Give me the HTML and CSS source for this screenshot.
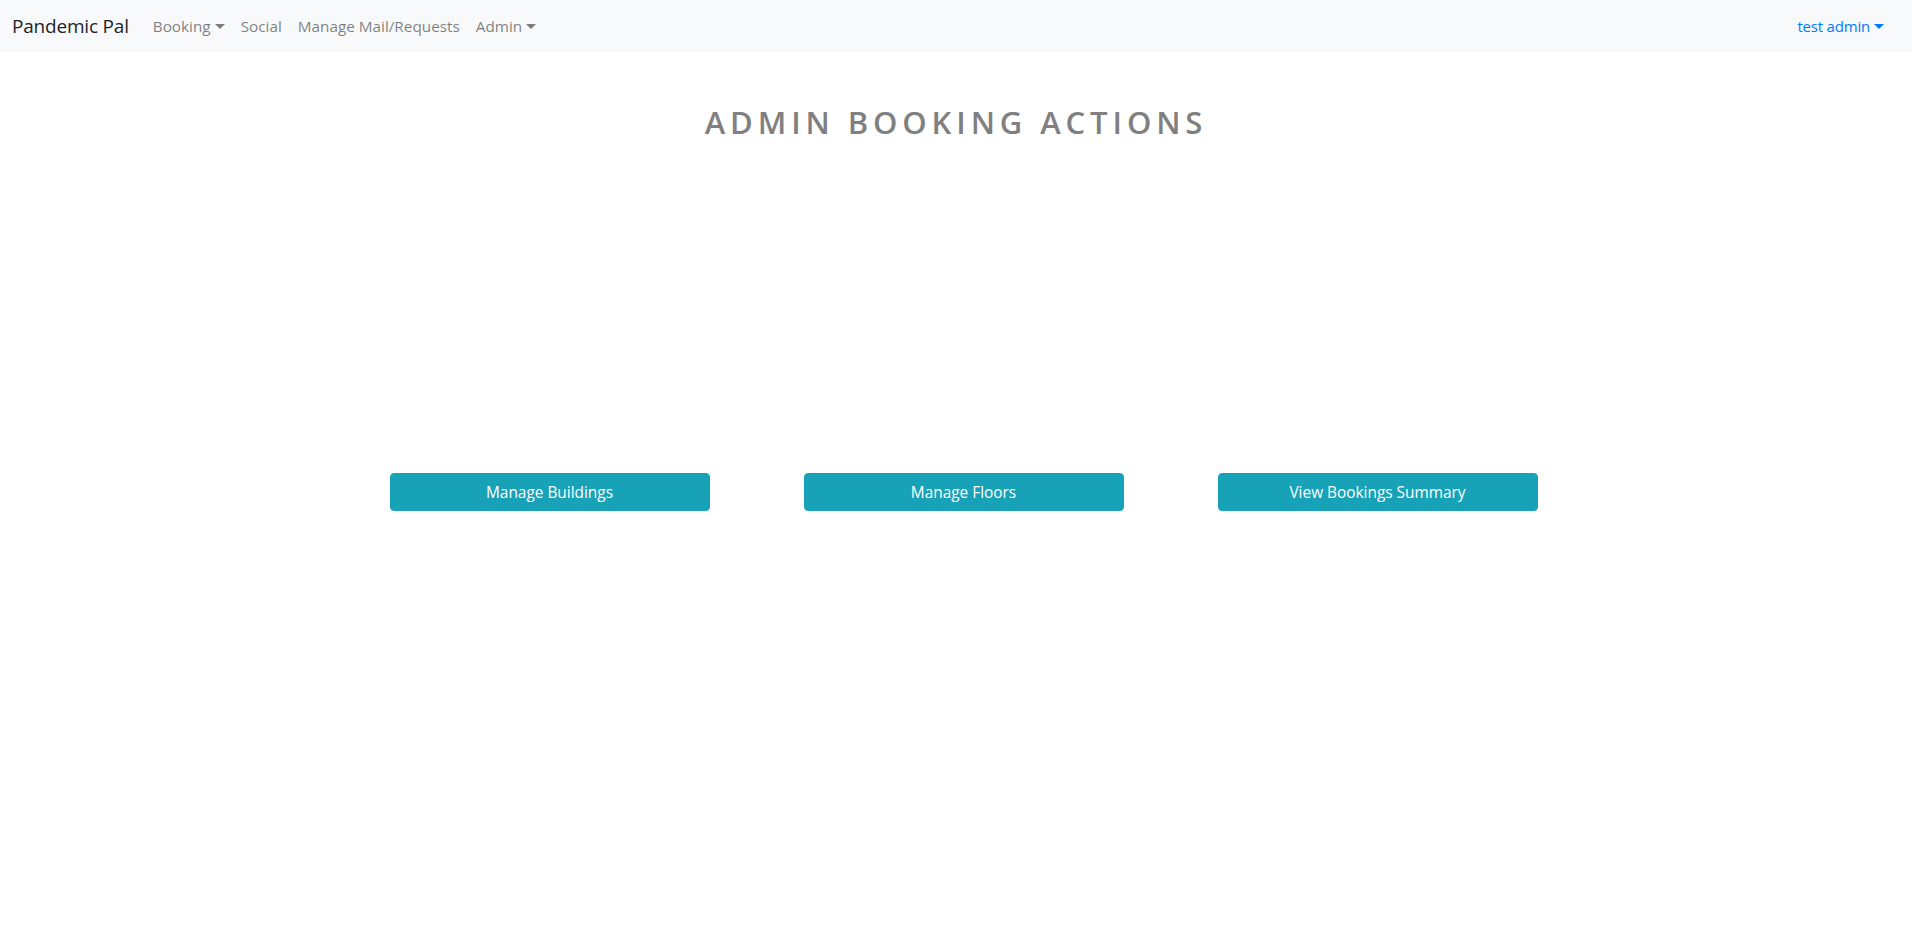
FILE: index.html
```html
<!DOCTYPE html>
<html lang="en">
<head>
<meta charset="utf-8">
<title>Pandemic Pal</title>
<link rel="stylesheet" href="styles.css">
</head>
<body>
<nav class="navbar">
  <a class="brand" href="#">Pandemic Pal</a>
  <ul class="nav">
    <li><a class="nav-link dropdown" href="#">Booking</a></li>
    <li><a class="nav-link" href="#">Social</a></li>
    <li><a class="nav-link" href="#">Manage Mail/Requests</a></li>
    <li><a class="nav-link dropdown" href="#">Admin</a></li>
  </ul>
  <a class="user-link dropdown" href="#">test admin</a>
</nav>
<main class="page">
  <h2 class="title">ADMIN BOOKING ACTIONS</h2>
  <div class="actions">
    <button class="btn">Manage Buildings</button>
    <button class="btn">Manage Floors</button>
    <button class="btn">View Bookings Summary</button>
  </div>
</main>
</body>
</html>
```
FILE: styles.css
```css
* { box-sizing: border-box; }
html, body { margin: 0; padding: 0; }
body {
  font-family: "Open Sans", "Noto Sans", sans-serif;
  font-size: 16px;
  color: #212529;
  background: #fff;
}
a { text-decoration: none; }
.navbar {
  display: flex;
  align-items: center;
  height: 52px;
  padding: 0 28px 0 12px;
  background: #f8f9fa;
}
.brand {
  font-size: 19px;
  color: #212529;
  margin-right: 16px;
  letter-spacing: -0.2px;
}
.nav {
  display: flex;
  list-style: none;
  margin: 0;
  padding: 0;
  flex: 1;
}
.nav-link {
  display: block;
  padding: 0 8px;
  font-size: 15.3px;
  color: rgba(0,0,0,.5);
}
.user-link {
  font-size: 15px;
  color: #007bff;
  letter-spacing: -0.2px;
}
.dropdown::after {
  content: "";
  display: inline-block;
  margin-left: 4px;
  vertical-align: 3px;
  border-top: 5px solid;
  border-right: 5px solid transparent;
  border-left: 5px solid transparent;
}
.page {
  padding-top: 52px;
}
.title {
  margin: 0;
  text-align: center;
  font-size: 31px;
  font-weight: 600;
  line-height: 1.2;
  letter-spacing: 4.9px;
  color: #808080;
}
.actions {
  display: grid;
  grid-template-columns: repeat(3, 320px);
  column-gap: 94px;
  justify-content: center;
  padding-left: 15px;
  margin-top: 332px;
}
.btn {
  height: 38px;
  border: 1px solid #17a2b8;
  border-radius: 4px;
  background: #17a2b8;
  color: #fff;
  font-family: inherit;
  font-size: 15.4px;
  cursor: pointer;
}
```
